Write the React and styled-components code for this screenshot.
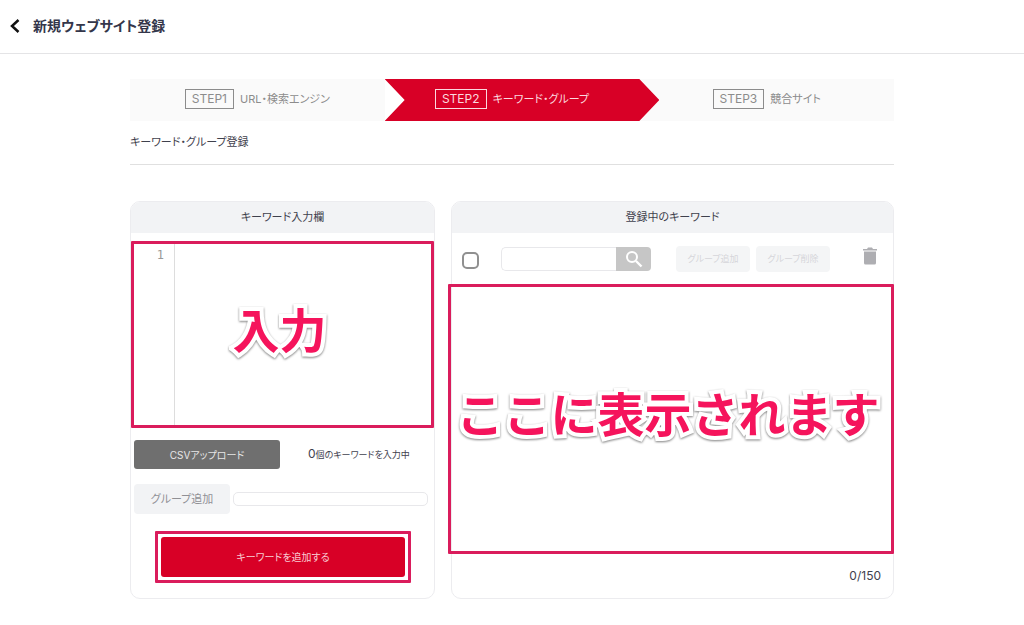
import React, { useState } from "react";
import styled, { createGlobalStyle, css } from "styled-components";

const GlobalStyle = createGlobalStyle`
  * {
    box-sizing: border-box;
  }
  body {
    margin: 0;
    background: #fff;
    color: #3f414d;
    font-family: Inter, "Noto Sans CJK JP", sans-serif;
    font-size: 11px;
    line-height: 16px;
    font-feature-settings: "palt";
  }
  button,
  input,
  textarea {
    font: inherit;
    font-feature-settings: inherit;
    color: inherit;
  }
  button {
    padding: 0;
    border: 0;
    cursor: pointer;
  }
`;

const Header = styled.header`
  display: flex;
  align-items: center;
  gap: 13px;
  height: 54px;
  padding: 0 10px 2px;
  border-bottom: 1px solid #e4e4e6;
`;

const BackButton = styled.button`
  display: flex;
  background: none;
  color: #111;
`;

const PageTitle = styled.h1`
  margin: 0;
  font-size: 14px;
  line-height: 20px;
  font-weight: 700;
  color: #34364a;
`;

const Main = styled.main`
  max-width: 1200px;
  margin: 0 auto;
  padding: 25px 130px;
`;

const Steps = styled.ol`
  display: grid;
  grid-template-columns: repeat(3, 1fr);
  margin: 0;
  padding: 0;
  list-style: none;
`;

const Step = styled.li`
  display: flex;
  align-items: center;
  justify-content: center;
  gap: 6px;
  height: 42px;
  padding-bottom: 2px;
  background: #fafafa;
  color: #8c8c8c;
  ${({ $active }) =>
    $active &&
    css`
      z-index: 1;
      margin-right: -20px;
      padding-right: 20px;
      background: #d80026;
      color: #fbd9df;
      clip-path: polygon(
        0 0,
        calc(100% - 20px) 0,
        100% 50%,
        calc(100% - 20px) 100%,
        0 100%,
        20px 50%
      );
    `}
`;

const StepNumber = styled.span`
  padding: 0 6px;
  border: 1px solid currentColor;
  font-size: 12px;
  line-height: 18px;
`;

const SectionTitle = styled.h2`
  margin: 0;
  padding: 13px 0 14px;
  border-bottom: 1px solid #e0e0e0;
  font-size: 11px;
  font-weight: 400;
`;

const Columns = styled.div`
  display: grid;
  grid-template-columns: 305fr 443fr;
  gap: 16px;
  margin-top: 36px;
`;

const Card = styled.section`
  display: flex;
  flex-direction: column;
  border: 1px solid #ececef;
  border-radius: 10px;
`;

const CardTitle = styled.h3`
  margin: 0;
  padding: 7px 0 8px;
  border-radius: 9px 9px 0 0;
  background: #f2f3f5;
  font-size: 11px;
  font-weight: 400;
  text-align: center;
`;

const Highlight = styled.div`
  display: flex;
  border: 3px solid #da1c5c;
  border-radius: 1px;
`;

const Editor = styled(Highlight)`
  position: relative;
  height: 187px;
  margin: 8px 0 12px;
`;

const Gutter = styled.div`
  width: 41px;
  padding: 3px 10px;
  border-right: 1px solid #ddd;
  color: #999;
  font-family: "DejaVu Sans Mono", monospace;
  font-size: 12px;
  text-align: right;
`;

const EditorInput = styled.textarea`
  flex: 1;
  min-width: 0;
  padding: 3px 4px;
  border: 0;
  outline: 0;
  resize: none;
  background: transparent;
`;

const Callout = styled.p`
  position: absolute;
  inset: 0;
  display: flex;
  align-items: center;
  justify-content: center;
  margin: 0;
  padding: 0 6px 14px 0;
  color: #f5145c;
  font-family: "Noto Sans CJK JP", sans-serif;
  font-size: 47px;
  line-height: 56px;
  font-weight: 700;
  font-feature-settings: normal;
  white-space: nowrap;
  pointer-events: none;

  span {
    -webkit-text-stroke: 8px #fff;
    paint-order: stroke fill;
    stroke-linejoin: round;
    filter: drop-shadow(0 1px 1px rgba(0, 0, 0, 0.5));
  }
`;

const Row = styled.div`
  display: flex;
  align-items: center;
  padding: 0 6px 0 3px;
`;

const UploadRow = styled(Row)`
  gap: 28px;
  margin-bottom: 15px;
`;

const GroupRow = styled(Row)`
  gap: 3px;
  margin-bottom: 17px;
`;

const UploadButton = styled.button`
  width: 146px;
  height: 29px;
  border-radius: 3px;
  background: #6f6f6f;
  color: #e6e6e6;
  font-size: 10px;
`;

const Count = styled.span`
  font-size: 9px;

  b {
    font-size: 12px;
    font-weight: 400;
  }
`;

const GroupButton = styled.button`
  width: 96px;
  height: 30px;
  border-radius: 4px;
  background: #f2f3f5;
  color: #909095;
`;

const TextInput = styled.input`
  flex: 1;
  min-width: 0;
  height: 14px;
  padding: 0 6px;
  border: 1px solid #e8e8eb;
  border-radius: 5px;
  outline: 0;
  background: #fff;
`;

const SubmitFrame = styled(Highlight)`
  margin: 0 23px 15px 24px;
  padding: 3px;
`;

const SubmitButton = styled.button`
  flex: 1;
  height: 40px;
  border-radius: 3px;
  background: #d80026;
  color: #f8ccd3;
  font-size: 10px;
`;

const Toolbar = styled.div`
  display: flex;
  align-items: center;
  height: 51px;
  padding: 0 16px 0 10px;
`;

const CheckAll = styled.input`
  appearance: none;
  width: 17px;
  height: 17px;
  margin: 3px 22px 0 0;
  border: 2px solid #909090;
  border-radius: 5px;

  &:checked {
    background: #909090;
  }
`;

const Search = styled.form`
  display: flex;
  flex: 1;
  max-width: 150px;
  height: 24px;
  margin-right: auto;
`;

const SearchInput = styled(TextInput)`
  height: 24px;
  border-right: 0;
  border-radius: 5px 0 0 5px;
`;

const SearchButton = styled.button`
  display: flex;
  align-items: center;
  justify-content: center;
  width: 35px;
  border-radius: 0 4px 4px 0;
  background: #c6c6c6;
  color: #fff;
`;

const SmallButton = styled.button`
  width: 74px;
  height: 26px;
  margin-right: 6px;
  border-radius: 4px;
  background: #f4f5f6;
  color: #d6d6da;
  font-size: 9px;
`;

const TrashButton = styled.button`
  display: flex;
  margin: 0 0 5px 27px;
  background: none;
  color: #aeaeb2;
`;

const KeywordList = styled(Highlight)`
  position: relative;
  flex: 1;
  margin: 0 -1px 0 -4px;
`;

const Total = styled.p`
  margin: 0;
  padding: 14px 12px;
  font-size: 12px;
  text-align: right;
`;

const steps = [
  { number: "STEP1", label: "URL・検索エンジン" },
  { number: "STEP2", label: "キーワード・グループ", active: true },
  { number: "STEP3", label: "競合サイト" },
];

const BackIcon = () => (
  <svg width="10" height="14" viewBox="0 0 10 14" fill="none">
    <path d="M8.500 1 2 7l6.500 6" stroke="currentColor" strokeWidth="2.500" />
  </svg>
);

const SearchIcon = () => (
  <svg width="18" height="18" viewBox="0 0 18 18" fill="none">
    <circle cx="7" cy="7" r="5" stroke="currentColor" strokeWidth="2" />
    <path d="m11 11 5.500 5.500" stroke="currentColor" strokeWidth="2.400" />
  </svg>
);

const TrashIcon = () => (
  <svg width="14" height="18" viewBox="0 0 14 18" fill="currentColor">
    <path d="M0 2h4l1-1.500h4L10 2h4v1.500H0z" />
    <path d="M1 4.500h12V16a1.500 1.500 0 0 1-1.500 1.500h-9A1.500 1.500 0 0 1 1 16z" />
  </svg>
);

const App = () => {
  const [keywords, setKeywords] = useState("");
  const lines = keywords.split("\n");
  const count = lines.filter((l) => l.trim()).length;

  return (
    <>
      <GlobalStyle />
      <Header>
        <BackButton type="button" aria-label="戻る">
          <BackIcon />
        </BackButton>
        <PageTitle>新規ウェブサイト登録</PageTitle>
      </Header>
      <Main>
        <Steps>
          {steps.map((s) => (
            <Step key={s.number} $active={s.active}>
              <StepNumber>{s.number}</StepNumber>
              <span>{s.label}</span>
            </Step>
          ))}
        </Steps>
        <SectionTitle>キーワード・グループ登録</SectionTitle>
        <Columns>
          <Card>
            <CardTitle>キーワード入力欄</CardTitle>
            <Editor>
              <Gutter>
                {lines.map((_, idx) => (
                  <div key={idx}>{idx + 1}</div>
                ))}
              </Gutter>
              <EditorInput
                aria-label="キーワード入力欄"
                value={keywords}
                onChange={(e) => setKeywords(e.target.value)}
              />
              <Callout>
                <span>入力</span>
              </Callout>
            </Editor>
            <UploadRow>
              <UploadButton type="button">CSVアップロード</UploadButton>
              <Count>
                <b>{count}</b>個のキーワードを入力中
              </Count>
            </UploadRow>
            <GroupRow>
              <GroupButton type="button">グループ追加</GroupButton>
              <TextInput type="text" aria-label="グループ" />
            </GroupRow>
            <SubmitFrame>
              <SubmitButton type="button">キーワードを追加する</SubmitButton>
            </SubmitFrame>
          </Card>
          <Card>
            <CardTitle>登録中のキーワード</CardTitle>
            <Toolbar>
              <CheckAll type="checkbox" aria-label="すべて選択" />
              <Search onSubmit={(e) => e.preventDefault()}>
                <SearchInput type="text" aria-label="キーワード検索" />
                <SearchButton type="submit" aria-label="検索">
                  <SearchIcon />
                </SearchButton>
              </Search>
              <SmallButton type="button">グループ追加</SmallButton>
              <SmallButton type="button">グループ削除</SmallButton>
              <TrashButton type="button" aria-label="削除">
                <TrashIcon />
              </TrashButton>
            </Toolbar>
            <KeywordList>
              <Callout>
                <span>ここに表示されます</span>
              </Callout>
            </KeywordList>
            <Total>0/150</Total>
          </Card>
        </Columns>
      </Main>
    </>
  );
};

export default App;
